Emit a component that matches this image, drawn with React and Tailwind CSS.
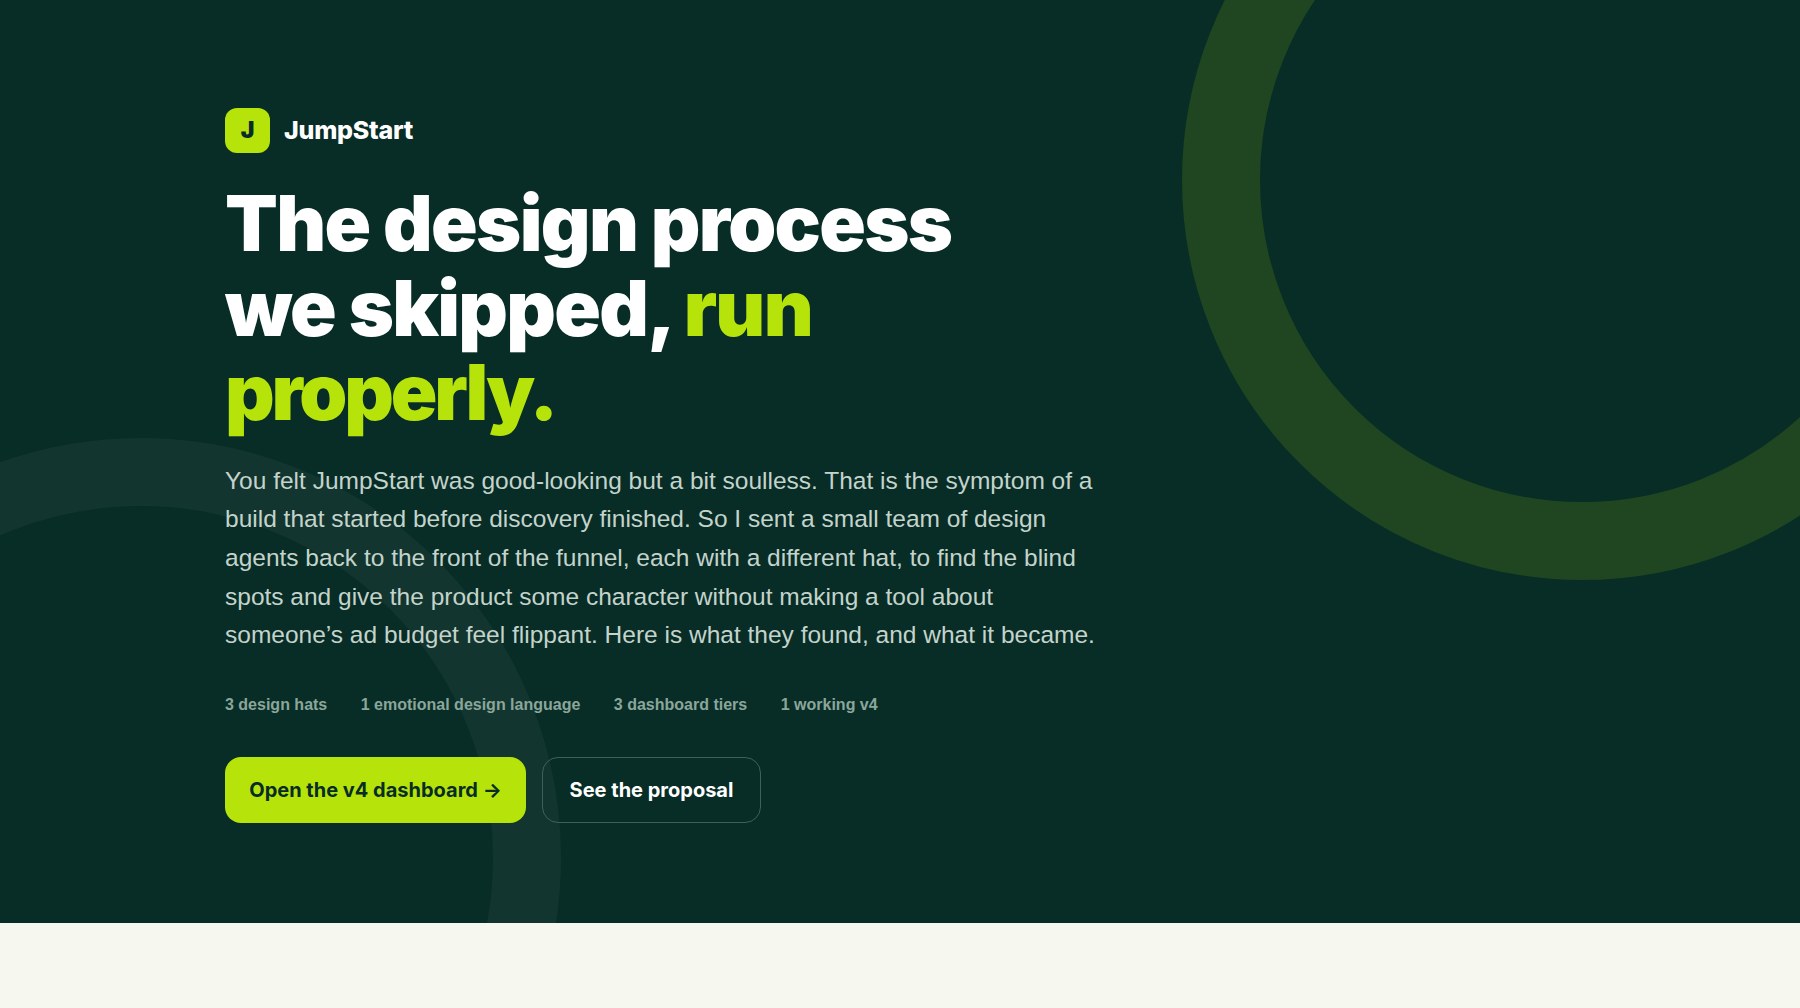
import React from 'react';

const stats = ['3 design hats', '1 emotional design language', '3 dashboard tiers', '1 working v4'];

const App = () => {
  return (
    <div className="min-h-[1008px] bg-[#f6f7ef] font-['Liberation_Sans',sans-serif]">
      <section className="relative h-[923px] overflow-hidden bg-[#072d26] pl-[225px] pt-[108px]">
        {/* Decorative rings */}
        <div className="absolute right-[-182px] top-[-220px] h-[800px] w-[800px] rounded-full border-[78px] border-[#1f4620]" />
        <div className="absolute bottom-[-355px] left-[-279px] h-[840px] w-[840px] rounded-full border-[68px] border-[#12362f]" />

        <div className="relative">
          <div className="flex items-center gap-[14px]">
            <div className="flex h-[45px] w-[45px] items-center justify-center rounded-[12px] bg-[#b6e40a] font-['Inter',sans-serif] text-[23px] font-black text-[#072d26]">
              J
            </div>
            <span className="font-['Inter',sans-serif] text-[25px] font-extrabold tracking-[-0.25px] text-white">JumpStart</span>
          </div>

          <h1 className="mt-[28px] font-['Inter',sans-serif] text-[77px] font-black leading-[84.5px] tracking-[-1.7px] whitespace-nowrap text-white">
            The design process
            <br />
            we skipped, <span className="text-[#b6e40a]">run</span>
            <br />
            <span className="tracking-[-3.2px] text-[#b6e40a]">properly.</span>
          </h1>

          <p className="mt-[27px] text-[24.5px] leading-[38.7px] whitespace-nowrap text-[#c4d3cb]">
            You felt JumpStart was good-looking but a bit soulless. That is the symptom of a
            <br />
            build that started before discovery finished. So I sent a small team of design
            <br />
            agents back to the front of the funnel, each with a different hat, to find the blind
            <br />
            spots and give the product some character without making a tool about
            <br />
            someone’s ad budget feel flippant. Here is what they found, and what it became.
          </p>

          <div className="mt-[38px] flex gap-[33.5px] text-[16px] font-bold leading-[24px] text-[#8ba69b]">
            {stats.map((stat) => (
              <span key={stat}>{stat}</span>
            ))}
          </div>

          <div className="mt-[40px] flex gap-[16px] font-['Inter',sans-serif] text-[20px] font-bold">
            <button className="flex h-[66px] w-[301px] items-center justify-center rounded-[16px] bg-[#b6e40a] text-[#072d26]">
              Open the v4 dashboard →
            </button>
            <button className="flex h-[66px] w-[219px] items-center justify-center rounded-[16px] border border-[#3f605a] text-white">
              See the proposal
            </button>
          </div>
        </div>
      </section>
    </div>
  );
};

export default App;
